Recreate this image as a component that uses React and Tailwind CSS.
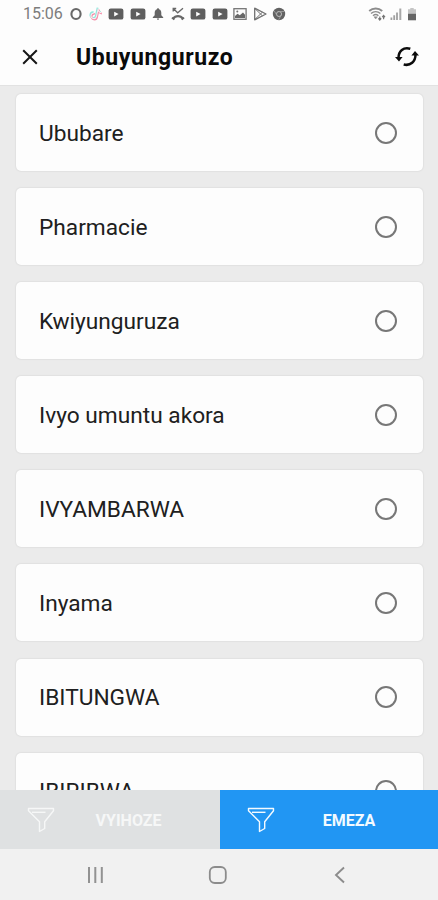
const FILTERS = [
  'Ububare',
  'Pharmacie',
  'Kwiyunguruza',
  'Ivyo umuntu akora',
  'IVYAMBARWA',
  'Inyama',
  'IBITUNGWA',
  'IBIRIBWA',
]

function OperaIcon() {
  return (
    <svg viewBox="0 0 14 14" className="w-3.5 h-3.5">
      <ellipse cx="7" cy="7" rx="4.6" ry="5" fill="none" stroke="#686868" strokeWidth="2.1" />
    </svg>
  )
}

function TiktokIcon() {
  const note = 'M8 1v8.200a2.800 2.800 0 1 1-2.800-2.800M8 1.400c.3 2 1.700 3.200 4 3.300'
  return (
    <svg viewBox="0 0 14 14" className="w-3.5 h-3.5 rotate-12 overflow-visible" fill="none" strokeWidth="1.8">
      <path d={note} stroke="#8fe6dc" transform="translate(-.8 -.6)" />
      <path d={note} stroke="#f490aa" transform="translate(.7 .8)" />
      <path d={note} stroke="#f8f0f2" strokeWidth="1" />
    </svg>
  )
}

function VideoIcon() {
  return (
    <svg viewBox="0 0 16 12" className="w-4 h-3">
      <rect x=".6" y=".6" width="14.8" height="11" rx="2.2" fill="#5e5e5e" />
      <path d="M6.2 3.7v4.8L10.6 6.1z" fill="#fff" />
    </svg>
  )
}

function BellIcon() {
  return (
    <svg viewBox="0 0 14 14" className="w-3.5 h-3.5" fill="#646464">
      <path d="M7 1.2c.7 0 1 .4 1 1C9.8 2.8 10.3 4.3 10.3 6v2.300l1.900 1.900v.7H1.800v-.7l1.900-1.900V6c0-1.700.5-3.200 2.300-3.800 0-.6.3-1 1-1z" />
      <path d="M5.800 11.600h2.400a1.200 1.200 0 0 1-2.400 0z" />
    </svg>
  )
}

function MissedCallIcon() {
  return (
    <svg viewBox="0 0 14 14" className="w-3.5 h-3.5" fill="none" stroke="#686868">
      <path d="M2.200 4.600V1.500h3M2.500 1.800L6.700 5.800 12 1.200" strokeWidth="1.300" />
      <path d="M2 11.800c2.600-3.600 7.400-3.600 10 0" strokeWidth="2.200" />
      <path d="M.9 10.700l2.400 2M13.100 10.700l-2.400 2" strokeWidth="1.700" />
    </svg>
  )
}

function ImageIcon() {
  return (
    <svg viewBox="0 0 14 14" className="w-3.5 h-3.5">
      <rect x=".9" y="1.700" width="12.200" height="10.600" fill="none" stroke="#757575" strokeWidth="1.300" />
      <path d="M2 10.900V9l2.500-2.200 2.300 1.500L10 5.600l2 2.200v3.100z" fill="#686868" />
      <circle cx="4.300" cy="4.500" r="1" fill="#757575" />
    </svg>
  )
}

function PlayIcon() {
  return (
    <svg viewBox="0 0 14 14" className="w-3.5 h-3.5" fill="none" stroke="#707070" strokeLinejoin="round">
      <path d="M1.700 1.200v11.600L13 7z" strokeWidth="1.300" />
      <path d="M2 1.700l7.300 7M2 12.300l7.300-7" strokeWidth="1" />
    </svg>
  )
}

function ChromeIcon() {
  return (
    <svg viewBox="0 0 14 14" className="w-3.5 h-3.5">
      <circle cx="7" cy="7" r="6.200" fill="#626262" />
      <circle cx="7" cy="7" r="2.500" fill="#626262" stroke="#bdbdbd" strokeWidth="1" />
      <path d="M7 4.500h5.300M4.800 8.200L2.200 3.800M9.200 8.200l-2.500 4.500" stroke="#a5a5a5" strokeWidth=".8" />
    </svg>
  )
}

function StatusBar() {
  return (
    <div className="flex items-center h-[28px] pl-[23px] pr-[21px]">
      <span className="w-[46px] text-[16px] leading-none text-[#7c7c7c] whitespace-nowrap">15:06</span>
      <div className="flex w-[217px] items-center justify-between">
        <OperaIcon />
        <TiktokIcon />
        <VideoIcon />
        <VideoIcon />
        <BellIcon />
        <MissedCallIcon />
        <VideoIcon />
        <VideoIcon />
        <ImageIcon />
        <PlayIcon />
        <ChromeIcon />
      </div>
      <div className="flex flex-1 items-center justify-end">
        {/* Wifi */}
        <svg viewBox="0 0 18 14" className="w-[18px] h-3.5" fill="none" stroke="#8c8c8c">
          <path d="M1.200 4c3.800-3.300 9.200-3.300 13 0" strokeWidth="2" />
          <path d="M3 6.400c2.700-2.400 6.700-2.400 9.400 0M5 8.700c1.600-1.400 3.800-1.400 5.400 0" strokeWidth="1.400" />
          <path d="M6 9.800l1.700 2.200 1.700-2.200z" fill="#8c8c8c" strokeWidth=".5" />
          <path d="M11.800 13V9.500M10.400 11.300l1.400 1.700 1.400-1.700M15.600 8.500v3.700M14.200 10.200l1.400-1.700L17 10.200" stroke="#757575" strokeWidth="1.200" />
        </svg>
        {/* Signal */}
        <svg viewBox="0 0 12 14" className="ml-1 w-3 h-3.5">
          <path d="M.5 10.500h1.800V13H.5zM3.300 8.200h1.800V13H3.300zM6.100 5.500h1.800V13H6.100z" fill="#a0a0a0" />
          <path d="M9.300 1.500h2V13h-2z" fill="#a8a8a8" />
        </svg>
        {/* Battery */}
        <svg viewBox="0 0 10 14" className="ml-[5px] w-2.5 h-3.5">
          <path d="M3.300 1h3.400v1.300h2.300V7H1V2.300h2.300z" fill="#c4c4c4" />
          <path d="M1 6.800h8V13.300H1z" fill="#656565" />
        </svg>
      </div>
    </div>
  )
}

function Header() {
  return (
    <header className="flex items-center h-[57px] pl-[22px] pr-[18px]">
      <svg viewBox="0 0 16 16" className="w-4 h-4" fill="none" stroke="#161616" strokeWidth="2">
        <path d="M1.200 1.200l13.600 13.600M14.800 1.200L1.200 14.800" />
      </svg>
      <h1 className="ml-[38px] pt-px flex-1 text-[23px] leading-none font-bold tracking-[0.6px] text-[#0a0a0a]">Ubuyunguruzo</h1>
      <svg viewBox="0 0 26 22" className="w-[26px] h-[22px]" fill="none" stroke="#0c0c0c" strokeWidth="2.500">
        <path d="M4.500 12C4.500 5 9.500.8 16.300 2.800" />
        <path d="M21.500 8.500C21.500 15.500 16.500 20.200 9.700 18.500" />
        <path d="M1 11h7.600l-3.600 4.600zM25 9.500h-7.600l3.600-4.600z" fill="#0c0c0c" stroke="none" />
      </svg>
    </header>
  )
}

function FilterCard({ label }) {
  return (
    <li className="flex shrink-0 items-center justify-between h-[77px] pl-[23px] pr-[26px] rounded-[5px] bg-[#fdfdfd] shadow-[0_0_2px_rgba(0,0,0,0.14)]">
      <span className="pt-[3px] text-[22.7px] leading-none text-[#202020]">{label}</span>
      <span className="w-[22px] h-[22px] rounded-full border-2 border-[#777777]" />
    </li>
  )
}

function FunnelIcon() {
  return (
    <svg viewBox="0 0 28 26" className="w-7 h-[26px]" fill="none" stroke="currentColor" strokeWidth="1.400" strokeLinejoin="round">
      <path d="M1.500 1.500h25v2.200l-8.800 11.100v6.700l-5.200 3v-9.700L1.500 3.700z" />
      <path d="M5 5.300h13.500" />
    </svg>
  )
}

function ActionButton({ label, className }) {
  return (
    <button className={`flex items-center h-full ${className}`}>
      <FunnelIcon />
      <span className="flex-1 pt-[3px] text-center text-[16px] leading-none font-bold">{label}</span>
    </button>
  )
}

export default function App() {
  return (
    <div className="flex flex-col w-[438px] h-[900px] overflow-hidden bg-[#fdfdfd] font-['Roboto',sans-serif]">
      <StatusBar />
      <Header />

      {/* Filter list */}
      <ul className="flex flex-col flex-1 min-h-0 gap-[17.1px] overflow-hidden border-t border-[#e2e2e2] bg-[#ebebeb] pt-2 pl-4 pr-[15px]">
        {FILTERS.map((label) => (
          <FilterCard key={label} label={label} />
        ))}
      </ul>

      {/* Actions */}
      <div className="flex shrink-0 h-[59px]">
        <ActionButton label="VYIHOZE" className="w-[220px] pl-[27px] pr-[18px] bg-[#dfe1e2] text-[#f6f7f7]" />
        <ActionButton label="EMEZA" className="w-[218px] pl-[27px] pr-[15px] bg-[#2196f3] text-[#f3faff]" />
      </div>

      {/* Navigation bar */}
      <nav className="flex shrink-0 items-center justify-between h-[51px] pl-[86px] pr-[89px] pt-px bg-[#f1f1f1]">
        <svg viewBox="0 0 18 18" className="w-[18px] h-[18px]" stroke="#929292" strokeWidth="2">
          <path d="M3 1v16M9.300 1v16M15.800 1v16" />
        </svg>
        <svg viewBox="0 0 20 20" className="w-5 h-5" fill="none" stroke="#8c8c8c" strokeWidth="1.800">
          <rect x="1.800" y="2" width="16" height="16" rx="5" />
        </svg>
        <svg viewBox="0 0 18 18" className="w-[18px] h-[18px]" fill="none" stroke="#8c8c8c" strokeWidth="1.900">
          <path d="M13 1.500L5 9l8 7.500" />
        </svg>
      </nav>
    </div>
  )
}
